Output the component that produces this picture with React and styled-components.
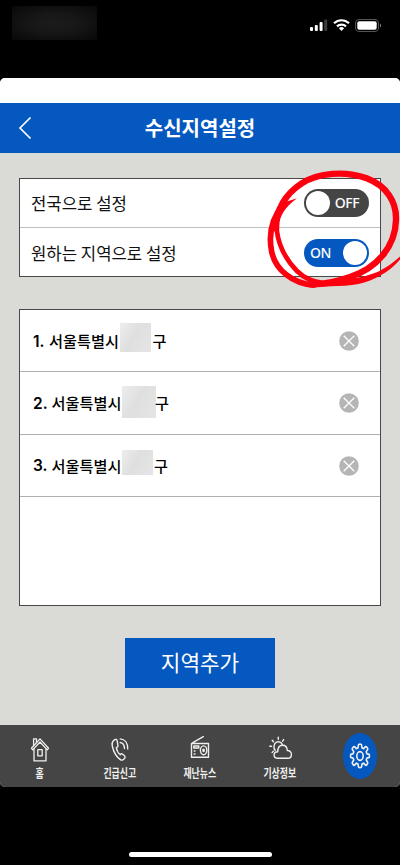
import React, { useState } from 'react'
import styled, { createGlobalStyle } from 'styled-components'

const GlobalStyle = createGlobalStyle`
    * {
        box-sizing: border-box;
    }
    body {
        margin: 0;
        background-color: #000;
        font-family: "Noto Sans CJK KR", "Noto Sans", sans-serif;
    }
`

const Phone = styled.div`
    position: relative;
    width: 400px;
    height: 865px;
    overflow: hidden;
    background-color: #000;
    display: flex;
    flex-direction: column;
    align-items: center;
`
const StatusBar = styled.div`
    width: 100%;
    height: 78px;
    flex-shrink: 0;
    display: flex;
    justify-content: space-between;
    align-items: flex-start;
    padding: 6px 18px 0 12px;
`
const Clock = styled.div`
    width: 85px;
    height: 34px;
    background: radial-gradient(ellipse at 50% 50%, #1b1b1b 0%, #171717 40%, #080808 100%);
`
const StatusIcons = styled.svg`
    width: 74px;
    height: 20px;
    margin-top: 9px;
`
const Screen = styled.div`
    width: 400px;
    height: 709px;
    flex-shrink: 0;
    border-radius: 5px;
    overflow: hidden;
    background-color: #dadbd6;
    display: flex;
    flex-direction: column;
`
const TopSpace = styled.div`
    height: 25px;
    flex-shrink: 0;
    background-color: #fff;
`
const Header = styled.header`
    height: 50px;
    flex-shrink: 0;
    background-color: #0558c0;
    display: grid;
    grid-template-columns: 50px 1fr 50px;
    align-items: center;
`
const BackButton = styled.button`
    width: 50px;
    height: 50px;
    padding: 0;
    border: none;
    background: none;
    cursor: pointer;
    svg {
        display: block;
        margin-left: 17px;
    }
`
const Title = styled.h1`
    margin: 0;
    font-size: 20px;
    font-weight: 700;
    line-height: 50px;
    text-align: center;
    color: #fff;
`
const Content = styled.main`
    flex: 1;
    padding: 25px 19px 0;
    display: flex;
    flex-direction: column;
    align-items: center;
`
const Panel = styled.section`
    width: 362px;
    height: ${props => props.$height}px;
    flex-shrink: 0;
    border: 1px solid #484848;
    background-color: #fff;
    margin-bottom: ${props => props.$gap}px;
`
const SettingRow = styled.div`
    height: 47.5px;
    padding: 0 11px;
    display: flex;
    align-items: center;
    justify-content: space-between;
    font-size: 16.7px;
    line-height: 46px;
    color: #111;
    & + & {
        height: 49.5px;
        padding-top: 2px;
        border-top: 1.5px solid #c0c0c0;
    }
`
const Toggle = styled.button`
    width: 65px;
    height: 28px;
    padding: 0 2px;
    border: none;
    border-radius: 14px;
    background-color: ${props => props.$on ? '#0558c0' : '#454545'};
    display: flex;
    flex-direction: ${props => props.$on ? 'row-reverse' : 'row'};
    align-items: center;
    cursor: pointer;
`
const Knob = styled.span`
    width: 24px;
    height: 24px;
    border-radius: 50%;
    background-color: #fff;
`
const ToggleText = styled.span`
    flex: 1;
    text-align: center;
    font-family: "Noto Sans", sans-serif;
    font-size: 14px;
    font-weight: 500;
    line-height: 28px;
    letter-spacing: -0.4px;
    padding: ${props => props.$on ? '0 8px 0 0' : '0 3px 0 0'};
    color: #fff;
`
const RegionRow = styled.div`
    height: 62.5px;
    padding: 1px 21.5px 0 13px;
    display: flex;
    align-items: center;
    border-bottom: 1px solid #b0b0b0;
    font-size: 15.2px;
    font-weight: 500;
    color: #000;
    &:first-child {
        height: 62px;
    }
`
const RegionNumber = styled.span`
    font-family: Inter, sans-serif;
    font-size: 15.5px;
    font-weight: 600;
    width: ${props => props.$width}px;
`
const RegionName = styled.span`
    margin-bottom: 2px;
`
const Blurred = styled.span`
    width: ${props => props.$width}px;
    height: ${props => props.$height}px;
    margin: 0 ${props => props.$right}px ${props => props.$lift}px ${props => props.$left}px;
    background: linear-gradient(120deg, #ededed, #dfdfdf 45%, #e5e5e5);
`
const RemoveButton = styled.button`
    width: 20px;
    height: 20px;
    margin-left: auto;
    padding: 0;
    border: none;
    background: none;
    cursor: pointer;
    svg {
        display: block;
    }
`
const AddButton = styled.button`
    width: 150px;
    height: 50px;
    padding: 0 0 2px;
    border: none;
    background-color: #0558c0;
    color: #fff;
    font-family: inherit;
    font-size: 21.3px;
    line-height: 47px;
    cursor: pointer;
`
const TabBar = styled.nav`
    height: 62px;
    flex-shrink: 0;
    background-color: #454545;
    display: grid;
    grid-template-columns: repeat(5, 1fr);
`
const Tab = styled.a`
    display: flex;
    flex-direction: column;
    align-items: center;
    padding-top: 10px;
    color: #f0f0ee;
    svg {
        flex-shrink: 0;
    }
`
const TabLabel = styled.span`
    font-size: 12.4px;
    font-weight: 700;
    line-height: 18px;
    margin-top: 1px;
    white-space: nowrap;
    transform: scaleX(0.72);
`
const ActiveTab = styled.span`
    width: 34px;
    height: 46px;
    margin-top: -2px;
    border-radius: 50%;
    background-color: #0558c0;
    display: flex;
    align-items: center;
    justify-content: center;
`
const HomeIndicator = styled.div`
    width: 143px;
    height: 5px;
    margin-top: 65px;
    border-radius: 3px;
    background-color: #fff;
`
const Marker = styled.svg`
    position: absolute;
    left: 250px;
    top: 160px;
    width: 150px;
    height: 140px;
    pointer-events: none;
`

const Line = ({ children, width = 28, height = 28, stroke = 1.4 }) => (
    <svg width={width} height={height} viewBox={`0 0 ${width} ${height}`} fill="none" stroke="currentColor" strokeWidth={stroke} strokeLinecap="round" strokeLinejoin="round">
        {children}
    </svg>
)

const HomeIcon = () => (
    <Line stroke={1.3}>
        <path d="M5.4 13.2 14 3.9l8.6 9.3-1.300 1.700L14 7l-7.300 7.900z" />
        <path d="M8 14v11.800h12V14M7.600 10.600V3.800h2.900v3.600" />
        <path d="M11.800 14.600h4.400v6.200h-4.400z" />
    </Line>
)

const CallIcon = () => (
    <Line stroke={1.4}>
        <path d="M8.800 4.600C6 6.200 5.600 9.200 6.700 12.800c1.300 4.800 4.300 9.600 7.700 11.900 1.500 1 3.500-.1 4.500-1.800.5-.9.2-1.600-.4-2.100l-2.100-1.800c-.7-.6-1.500-.4-2.100.8-1.800-1.300-3.600-4.700-4-7.300 1.300-.1 1.800-.8 1.600-1.900L11.200 5.800c-.3-1.300-1.300-1.800-2.400-1.200z" />
        <path d="M14.200 3.900c4.600.3 7.600 4 7.500 10M14.200 7.500c2.700.4 4.200 2.600 4.300 6" />
    </Line>
)

const RadioIcon = () => (
    <Line stroke={1.4}>
        <path d="M5.500 8.500h17v13.800h-17zM6.800 7.600 17.300 1.700" />
        <path d="M7.800 11h5v2h-5z" />
        <ellipse cx="17.600" cy="15.300" rx="3.200" ry="4.400" />
        <ellipse cx="17.600" cy="15.300" rx="0.700" ry="1.200" />
        <path d="M8.200 16h.8M8.200 19h.8" />
    </Line>
)

const WeatherIcon = () => (
    <Line stroke={1.4}>
        <path d="M9.200 15.500c-2-2.300-1.700-6.800 1.300-8.300 2.400-1.200 5.200.2 6 2.800" />
        <path d="M12.300 2.200v2M6.200 5.200l1.300 1.600M17.600 4.600l-1 1.600M3.800 11.300h1.700M6.100 17.600l1.200-1.300" />
        <path d="M11.200 23.200c-4.300-.4-4.100-6.500.5-6.500.1-4.100 2.200-6.500 4.900-6.500 2.700 0 4.500 2.200 4.700 5.300 2.300-.1 4.100 1.600 4.100 3.900 0 2.300-1.500 3.800-3.500 3.800z" />
    </Line>
)

const GearIcon = () => (
    <Line width={22} height={28} stroke={1.7}>
        <g transform="translate(0.650 0) scale(0.940 1)">
            <path d="M9.300 4.200c.1-1.200 3.300-1.200 3.400 0l.4 2.800 1.800.9 1.900-2c.9-.7 2.900 1.700 2.300 2.900L17.600 11l.8 2.100 2 .3c.9.200.9 3.200 0 3.400l-2 .4-.8 2 1.500 2.300c.6 1.100-1.400 3.600-2.300 2.900l-1.900-2-1.800.9-.4 2.700c-.1 1.200-3.300 1.200-3.400 0L8.900 23.300l-1.800-.9-1.900 2c-.9.7-2.900-1.800-2.300-2.900L4.400 19.200l-.8-2-2-.4c-.9-.2-.9-3.200 0-3.400l2-.3.8-2.100-1.500-2.200C2.300 7.600 4.300 5.200 5.200 5.900l1.900 2L8.900 7z" transform="translate(0 -1.200)" />
            <ellipse cx="11" cy="14" rx="3.400" ry="4.300" />
        </g>
    </Line>
)

const tabs = [
    { label: '홈', Icon: HomeIcon },
    { label: '긴급신고', Icon: CallIcon },
    { label: '재난뉴스', Icon: RadioIcon },
    { label: '기상정보', Icon: WeatherIcon },
]

const initialRegions = [
    { id: 1, numberWidth: 16, left: 1, right: 1.5, width: 31, height: 29, lift: 8 },
    { id: 2, numberWidth: 18.5, left: 0.5, right: -1, width: 34, height: 32, lift: 3 },
    { id: 3, numberWidth: 18.5, left: 1, right: 0.5, width: 31, height: 25, lift: 7 },
]

const App = () => {
    const [nationwide, setNationwide] = useState(false)
    const [regions, setRegions] = useState(initialRegions)
    const handleRemove = (id) => {
        setRegions(prev => prev.filter(region => region.id !== id))
    }
    return (
        <>
            <GlobalStyle />
            <Phone>
                <StatusBar>
                    <Clock />
                    <StatusIcons viewBox="0 0 74 20">
                        <rect x="2" y="12" width="3" height="4" rx="1" fill="#fff" />
                        <rect x="6.8" y="10" width="3" height="6" rx="1" fill="#fff" />
                        <rect x="11.6" y="7" width="3" height="9" rx="1" fill="#fff" />
                        <rect x="16.2" y="4.5" width="3" height="11.5" rx="1" fill="#3a3a3a" />
                        <g fill="none" stroke="#fff" strokeWidth="2.2">
                            <path d="M26 8.300a10.800 10.800 0 0 1 15 0" />
                            <path d="M29 11.400a6.600 6.600 0 0 1 9 0" />
                        </g>
                        <path d="M30.900 13.200a3.800 3.800 0 0 1 5.200 0L33.500 16z" fill="#fff" />
                        <rect x="47.5" y="4.5" width="23" height="12" rx="3.5" fill="none" stroke="#555" />
                        <rect x="49.3" y="6.3" width="19.4" height="8.4" rx="2" fill="#fff" />
                        <path d="M72 8.500c1.600.8 1.600 3.200 0 4z" fill="#777" />
                    </StatusIcons>
                </StatusBar>
                <Screen>
                    <TopSpace />
                    <Header>
                        <BackButton aria-label="back">
                            <svg width="16" height="24" viewBox="0 0 16 24" fill="none" stroke="#fff" strokeWidth="1.7">
                                <path d="M13.500 1.500 3 12l10.500 10.500" />
                            </svg>
                        </BackButton>
                        <Title>수신지역설정</Title>
                    </Header>
                    <Content>
                        <Panel $height={99} $gap={32}>
                            <SettingRow>
                                전국으로 설정
                                <Toggle $on={nationwide} onClick={() => setNationwide(!nationwide)}>
                                    <Knob />
                                    <ToggleText $on={nationwide}>{nationwide ? 'ON' : 'OFF'}</ToggleText>
                                </Toggle>
                            </SettingRow>
                            <SettingRow>
                                원하는 지역으로 설정
                                <Toggle $on={!nationwide} onClick={() => setNationwide(!nationwide)}>
                                    <Knob />
                                    <ToggleText $on={!nationwide}>{nationwide ? 'OFF' : 'ON'}</ToggleText>
                                </Toggle>
                            </SettingRow>
                        </Panel>
                        <Panel $height={297} $gap={31.5}>
                            {regions.map((region) => (
                                <RegionRow key={region.id}>
                                    <RegionNumber $width={region.numberWidth}>{region.id}.</RegionNumber>
                                    <RegionName>서울특별시</RegionName>
                                    <Blurred $width={region.width} $height={region.height} $left={region.left} $right={region.right} $lift={region.lift} />
                                    <RegionName>구</RegionName>
                                    <RemoveButton aria-label="remove" onClick={() => handleRemove(region.id)}>
                                        <svg width="20" height="20" viewBox="0 0 20 20">
                                            <circle cx="10" cy="10" r="9.8" fill="#b5b5b5" />
                                            <path d="m4.700 4.700 10.600 10.600M15.300 4.700 4.700 15.300" stroke="#fff" strokeWidth="1.3" />
                                        </svg>
                                    </RemoveButton>
                                </RegionRow>
                            ))}
                        </Panel>
                        <AddButton>지역추가</AddButton>
                    </Content>
                    <TabBar>
                        {tabs.map(({ label, Icon }) => (
                            <Tab key={label}>
                                <Icon />
                                <TabLabel>{label}</TabLabel>
                            </Tab>
                        ))}
                        <Tab>
                            <ActiveTab><GearIcon /></ActiveTab>
                        </Tab>
                    </TabBar>
                </Screen>
                <HomeIndicator />
                {/* hand drawn circle round the switches */}
                <Marker viewBox="0 0 450 420" fill="none" stroke="#fd0010" strokeLinecap="round">
                    <path d="M78 205C79 150 105 103 155 70C205 38 285 31 350 55C410 78 440 125 438 180C436 260 380 325 300 351C260 365 215 374 180 373" strokeWidth="19" />
                    <path d="M100 133C65 175 55 225 65 275C76 330 130 372 190 375" strokeWidth="17" />
                    <path d="M80 190C78 245 106 298 141 333C162 354 185 366 220 369" strokeWidth="14" />
                    <path d="M84 150C100 116 115 103 141 81L106 126L141 115C118 132 98 151 85 190Z" fill="#fd0010" stroke="none" />
                    <path d="M180 365C250 364 340 357 390 332C420 317 435 302 452 288L452 296C430 324 395 350 345 367C295 383 235 376 185 383Z" fill="#fd0010" stroke="none" />
                </Marker>
            </Phone>
        </>
    )
}

export default App
